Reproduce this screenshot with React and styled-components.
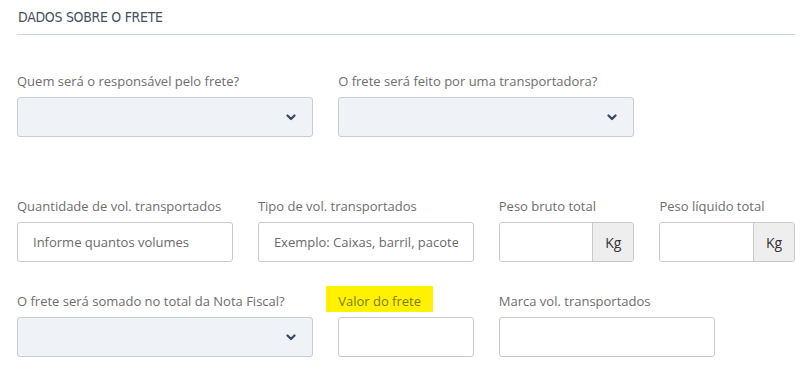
import styled, { createGlobalStyle } from "styled-components";

const GlobalStyle = createGlobalStyle`
  html, body {
    margin: 0;
    padding: 0;
    background: #fff;
  }
  body {
    font-family: "Open Sans", "Liberation Sans", sans-serif;
  }
`;

const Wrapper = styled.div`
  width: 811px;
  padding: 0 16px 0 17px;
  box-sizing: border-box;
`;

const Title = styled.h3`
  margin: 0;
  padding: 9px 0 0 1px;
  height: 25px;
  font-family: "Liberation Sans Narrow", "DejaVu Sans Condensed", sans-serif;
  font-stretch: condensed;
  font-weight: 400;
  font-size: 14px;
  letter-spacing: -0.3px;
  color: #465060;
  border-bottom: 1px solid #c9d4e2;
`;

const Row = styled.div`
  display: grid;
  grid-template-columns: repeat(10, 1fr);
  column-gap: 25px;
  margin-top: ${(p) => p.$top}px;
`;

const Field = styled.div`
  grid-column: span ${(p) => p.$span};
  display: flex;
  flex-direction: column;
`;

const Label = styled.label`
  align-self: flex-start;
  font-size: 13px;
  line-height: 16px;
  color: #6e6e6e;
  margin-bottom: 8px;
`;

const Highlight = styled.span`
  display: inline-block;
  background: #fff200;
  color: #7c7c12;
  margin: -7px 0 -3px -12px;
  padding: 7px 12px 3px 12px;
`;

const SelectBox = styled.div`
  height: 40px;
  box-sizing: border-box;
  border: 1px solid #c9ccd1;
  border-radius: 3px;
  background: #eff2f7;
  display: flex;
  align-items: center;
  justify-content: flex-end;
  padding-right: 16px;
  color: #34495e;
`;

const Input = styled.input`
  height: 40px;
  width: 100%;
  box-sizing: border-box;
  border: 1px solid #c9c9c9;
  border-radius: 3px;
  background: #fff;
  padding: 0 15px;
  font-family: "Open Sans", "Liberation Sans", sans-serif;
  font-size: 13px;
  color: #333;
  outline: none;

  &::placeholder {
    color: #6a6a6a;
  }
`;

const Group = styled.div`
  display: flex;
  height: 40px;
  box-sizing: border-box;
  border: 1px solid #c9c9c9;
  border-radius: 3px;
  overflow: hidden;
`;

const GroupInput = styled.input`
  flex: 1;
  min-width: 0;
  border: none;
  outline: none;
  background: #fff;
  padding: 0 12px;
`;

const Addon = styled.span`
  width: 40px;
  display: flex;
  align-items: center;
  justify-content: center;
  background: #eeeeee;
  border-left: 1px solid #c9c9c9;
  font-size: 14px;
  color: #333;
`;

const Chevron = () => (
  <svg width="10" height="7" viewBox="0 0 10 7">
    <path
      d="M1.5 1.5 L5 5 L8.5 1.5"
      fill="none"
      stroke="currentColor"
      strokeWidth="2.2"
      strokeLinecap="round"
      strokeLinejoin="round"
    />
  </svg>
);

const Select = () => (
  <SelectBox>
    <Chevron />
  </SelectBox>
);

const App = () => (
  <>
    <GlobalStyle />
    <Wrapper>
      <Title>DADOS SOBRE O FRETE</Title>

      <Row $top={38}>
        <Field $span={4}>
          <Label>Quem será o responsável pelo frete?</Label>
          <Select />
        </Field>
        <Field $span={4}>
          <Label>O frete será feito por uma transportadora?</Label>
          <Select />
        </Field>
      </Row>

      <Row $top={61}>
        <Field $span={3}>
          <Label>Quantidade de vol. transportados</Label>
          <Input placeholder="Informe quantos volumes" />
        </Field>
        <Field $span={3}>
          <Label>Tipo de vol. transportados</Label>
          <Input placeholder="Exemplo: Caixas, barril, pacote" />
        </Field>
        <Field $span={2}>
          <Label>Peso bruto total</Label>
          <Group>
            <GroupInput />
            <Addon>Kg</Addon>
          </Group>
        </Field>
        <Field $span={2}>
          <Label>Peso líquido total</Label>
          <Group>
            <GroupInput />
            <Addon>Kg</Addon>
          </Group>
        </Field>
      </Row>

      <Row $top={31}>
        <Field $span={4}>
          <Label>O frete será somado no total da Nota Fiscal?</Label>
          <Select />
        </Field>
        <Field $span={2}>
          <Label>
            <Highlight>Valor do frete</Highlight>
          </Label>
          <Input />
        </Field>
        <Field $span={3}>
          <Label>Marca vol. transportados</Label>
          <Input />
        </Field>
      </Row>
    </Wrapper>
  </>
);

export default App;
